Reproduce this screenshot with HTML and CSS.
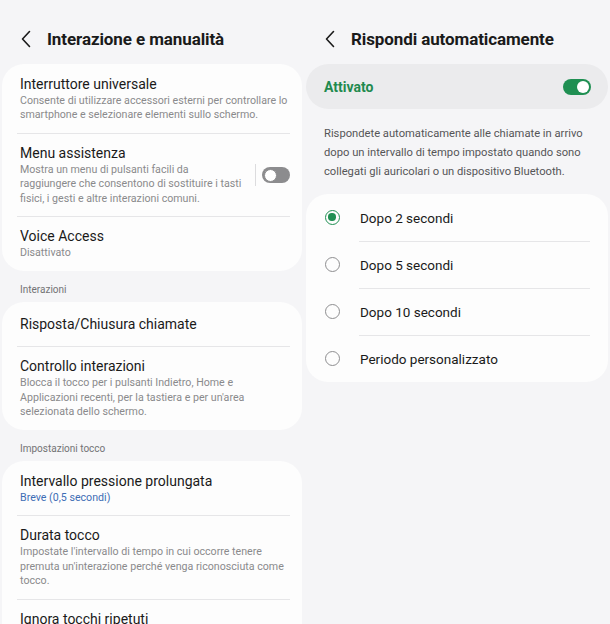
FILE: index.html
```html
<!DOCTYPE html>
<html lang="it">
<head>
    <meta charset="UTF-8">
    <meta name="viewport" content="width=device-width, initial-scale=1.0">
    <title>Interazione e manualità</title>
    <link rel="stylesheet" href="styles.css">
</head>
<body>
    <div class="screens">
        <div class="screen left">
            <div class="header">
                <svg class="back" width="12" height="18" viewBox="0 0 12 18"><path d="M9.5 1.5 L2.5 9 L9.5 16.5" fill="none" stroke="#1a1a1a" stroke-width="1.6" stroke-linecap="round" stroke-linejoin="round"/></svg>
                <h1>Interazione e manualità</h1>
            </div>

            <div class="card">
                <div class="item">
                    <div class="title">Interruttore universale</div>
                    <div class="sub">Consente di utilizzare accessori esterni per controllare lo smartphone e selezionare elementi sullo schermo.</div>
                </div>
                <div class="item with-switch">
                    <div class="text">
                        <div class="title">Menu assistenza</div>
                        <div class="sub">Mostra un menu di pulsanti facili da<br>raggiungere che consentono di sostituire i tasti fisici, i gesti e altre interazioni comuni.</div>
                    </div>
                    <span class="vline"></span>
                    <span class="switch off"></span>
                </div>
                <div class="item">
                    <div class="title">Voice Access</div>
                    <div class="sub">Disattivato</div>
                </div>
            </div>

            <div class="section">Interazioni</div>
            <div class="card">
                <div class="item single">
                    <div class="title">Risposta/Chiusura chiamate</div>
                </div>
                <div class="item">
                    <div class="title">Controllo interazioni</div>
                    <div class="sub">Blocca il tocco per i pulsanti Indietro, Home e<br>Applicazioni recenti, per la tastiera e per un'area selezionata dello schermo.</div>
                </div>
            </div>

            <div class="section">Impostazioni tocco</div>
            <div class="card">
                <div class="item">
                    <div class="title">Intervallo pressione prolungata</div>
                    <div class="sub blue">Breve (0,5 secondi)</div>
                </div>
                <div class="item">
                    <div class="title">Durata tocco</div>
                    <div class="sub">Impostate l'intervallo di tempo in cui occorre tenere premuta un'interazione perché venga riconosciuta come tocco.</div>
                </div>
                <div class="item">
                    <div class="title">Ignora tocchi ripetuti</div>
                    <div class="sub">Disattivato</div>
                </div>
            </div>
        </div>

        <div class="screen right">
            <div class="header">
                <svg class="back" width="12" height="18" viewBox="0 0 12 18"><path d="M9.5 1.5 L2.5 9 L9.5 16.5" fill="none" stroke="#1a1a1a" stroke-width="1.6" stroke-linecap="round" stroke-linejoin="round"/></svg>
                <h1>Rispondi automaticamente</h1>
            </div>

            <div class="master">
                <span>Attivato</span>
                <span class="switch on"></span>
            </div>

            <p class="desc">Rispondete automaticamente alle chiamate in arrivo dopo un intervallo di tempo impostato quando sono collegati gli auricolari o un dispositivo Bluetooth.</p>

            <div class="card radios">
                <div class="radio-row"><span class="radio checked"></span><span class="label">Dopo 2 secondi</span></div>
                <div class="radio-row"><span class="radio"></span><span class="label">Dopo 5 secondi</span></div>
                <div class="radio-row"><span class="radio"></span><span class="label">Dopo 10 secondi</span></div>
                <div class="radio-row"><span class="radio"></span><span class="label">Periodo personalizzato</span></div>
            </div>
        </div>
    </div>
</body>
</html>
```

FILE: styles.css
```css
body { margin: 0; background: #f5f5f7; font-family: Roboto, "Noto Sans", sans-serif; color: #1a1a1a; }
.screens { display: grid; grid-template-columns: 305px 305px; width: 610px; height: 624px; overflow: hidden; }
.screen.left { padding: 0 3px 0 2px; }
.screen.right { padding: 0 2px 0 1px; }

.header { height: 51px; padding-top: 13px; display: flex; align-items: center; gap: 15px; padding-left: 18px; }
.header h1 { margin: 0; font-size: 17px; font-weight: 700; letter-spacing: -0.1px; }
.back { display: block; }

.card { background: #fdfdfd; border-radius: 22px; }
.item { padding: 11px 12px 10.5px 18px; position: relative; }
.item + .item::before { content: ""; position: absolute; top: 0; left: 15px; right: 12px; height: 1px; background: #e6e6e8; }
.item.single { padding-top: 12.5px; padding-bottom: 12.5px; }
.title { font-size: 14px; line-height: 19px; }
.sub { font-size: 10.65px; line-height: 14.3px; color: #8a8a8c; }
.sub.blue { color: #3d6db5; }

.with-switch { display: flex; align-items: center; }
.with-switch .text { flex: 1; }
.vline { width: 1px; height: 22px; background: #dcdcde; margin: 0 6px 0 8px; }

.switch { width: 28px; height: 16px; border-radius: 8px; position: relative; flex: none; }
.switch::after { content: ""; position: absolute; top: 2px; width: 12px; height: 12px; border-radius: 50%; background: #fff; }
.switch.off { background: #8c8c8e; }
.switch.off::after { left: 2px; box-sizing: border-box; width: 13px; height: 13px; top: 1.5px; border: 1.5px solid #8c8c8e; }
.switch.on { background: #1f8f52; }
.switch.on::after { right: 2px; }

.section { font-size: 10px; color: #737375; padding: 13px 18px 0; height: 18px; box-sizing: content-box; }

.master { height: 45px; background: #ebebed; border-radius: 23px; display: flex; align-items: center; justify-content: space-between; padding: 0 17px 0 18px; }
.master span:first-child { color: #1f8a4f; font-weight: 700; font-size: 14px; }

.desc { margin: 0; padding: 15px 16px 0 18px; height: 72px; box-sizing: border-box; font-size: 11.2px; line-height: 19px; color: #555557; }

.radios { margin-top: 13px; padding: 0 18px 0 19px; }
.radio-row { height: 47px; display: flex; align-items: center; gap: 20px; position: relative; }
.radio-row + .radio-row::before { content: ""; position: absolute; top: 0; left: 34px; right: 0; height: 1px; background: #e6e6e8; }
.radio { width: 15px; height: 15px; box-sizing: border-box; border-radius: 50%; border: 1.3px solid #8e8e90; flex: none; position: relative; }
.radio.checked { border: 1.6px solid #1f8f52; }
.radio.checked::after { content: ""; position: absolute; left: 2.2px; top: 2.2px; width: 7.4px; height: 7.4px; border-radius: 50%; background: #1f8f52; }
.label { font-size: 13.5px; }
```
